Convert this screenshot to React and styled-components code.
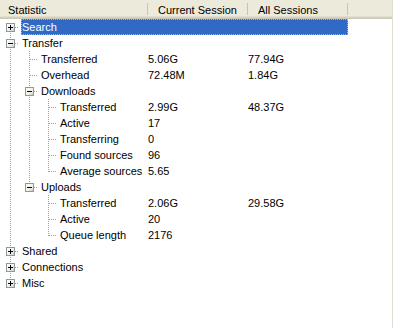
import React from "react";
import styled, { createGlobalStyle } from "styled-components";

const GlobalStyle = createGlobalStyle`
  html, body { margin: 0; padding: 0; background: #fff; }
  body {
    font-family: "Liberation Sans", Arial, sans-serif;
    font-size: 11px;
    color: #000;
  }
`;

const Frame = styled.div`
  width: 393px;
  height: 328px;
  box-sizing: border-box;
  border-right: 1px solid #e2dfd2;
  background: #fff;
  overflow: hidden;
`;

const Header = styled.div`
  display: flex;
  height: 19px;
  background: #ebeadb;
  box-shadow: inset 0 -1px #cbc7b8, inset 0 -2px #d6d2c2, inset 0 -3px #e2decd;
`;

const HeaderCell = styled.div`
  position: relative;
  flex: none;
  width: ${(p) => p.$w}px;
  box-sizing: border-box;
  padding-left: ${(p) => p.$pad}px;
  padding-top: 3px;
  line-height: 14px;
  white-space: nowrap;
  color: #000;
  &::after {
    content: "";
    position: absolute;
    right: 0;
    top: 3px;
    bottom: 4px;
    width: 1px;
    background: #c7c5b2;
  }
`;

const HeaderFill = styled.div`
  flex: 1;
`;

const Tree = styled.div`
  display: flex;
  flex-direction: column;
`;

const Row = styled.div`
  display: flex;
  height: 16px;
`;

const GuideSvg = styled.svg`
  flex: none;
  display: block;
  width: 19px;
  height: 16px;
  shape-rendering: crispEdges;
`;

const Body = styled.div`
  display: flex;
  flex: none;
  width: ${(p) => p.$w}px;
  margin-left: 2px;
  box-sizing: border-box;
  padding-top: 1px;
  line-height: 15px;
  white-space: nowrap;
  background: ${(p) => (p.$selected ? "#316ac5" : "transparent")};
  color: ${(p) => (p.$selected ? "#fff" : "#000")};
  outline: ${(p) => (p.$selected ? "1px dotted #9fb6e0" : "none")};
  outline-offset: -1px;
`;

const Label = styled.div`
  flex: 1;
  padding-left: 1px;
  overflow: hidden;
`;

const Value = styled.div`
  flex: none;
  width: 100px;
`;

const LINE = "#a0a0a0";

function Guide({ vertical, top, bottom, connector, expander, open }) {
  return (
    <GuideSvg viewBox="0 0 19 16">
      <defs>
        <linearGradient id="gbox" x1="0" y1="0" x2="1" y2="1">
          <stop offset="0" stopColor="#ffffff" />
          <stop offset="0.6" stopColor="#f0efe8" />
          <stop offset="1" stopColor="#c8c6b8" />
        </linearGradient>
      </defs>
      {vertical && (
        <line
          x1="10.5"
          y1={top ? 0 : 8}
          x2="10.5"
          y2={bottom ? 16 : 9}
          stroke={LINE}
          strokeDasharray="1 1"
        />
      )}
      {connector && (
        <line x1="11" y1="8.5" x2="19" y2="8.5" stroke={LINE} strokeDasharray="1 1" />
      )}
      {expander && (
        <g>
          <rect x="6.5" y="4.5" width="8" height="8" fill="url(#gbox)" stroke="#8c97a0" />
          <line x1="8" y1="8.5" x2="13" y2="8.5" stroke="#000" />
          {!open && <line x1="10.5" y1="6" x2="10.5" y2="11" stroke="#000" />}
        </g>
      )}
    </GuideSvg>
  );
}

const data = [
  { label: "Search", children: [{}], selected: true },
  {
    label: "Transfer",
    open: true,
    children: [
      { label: "Transferred", cur: "5.06G", all: "77.94G" },
      { label: "Overhead", cur: "72.48M", all: "1.84G" },
      {
        label: "Downloads",
        open: true,
        children: [
          { label: "Transferred", cur: "2.99G", all: "48.37G" },
          { label: "Active", cur: "17" },
          { label: "Transferring", cur: "0" },
          { label: "Found sources", cur: "96" },
          { label: "Average sources", cur: "5.65" },
        ],
      },
      {
        label: "Uploads",
        open: true,
        children: [
          { label: "Transferred", cur: "2.06G", all: "29.58G" },
          { label: "Active", cur: "20" },
          { label: "Queue length", cur: "2176" },
        ],
      },
    ],
  },
  { label: "Shared", children: [{}] },
  { label: "Connections", children: [{}] },
  { label: "Misc", children: [{}] },
];

function flatten(nodes, depth, cont, out) {
  nodes.forEach((n, i) => {
    const isLast = i === nodes.length - 1;
    const isFirstRoot = depth === 0 && i === 0;
    out.push({ ...n, depth, cont, isLast, isFirstRoot });
    if (n.children && n.open) flatten(n.children, depth + 1, [...cont, !isLast], out);
  });
  return out;
}

const rows = flatten(data, 0, [], []);

export default function App() {
  return (
    <>
      <GlobalStyle />
      <Frame>
        <Header>
          <HeaderCell $w={148} $pad={8}>Statistic</HeaderCell>
          <HeaderCell $w={100} $pad={10}>Current Session</HeaderCell>
          <HeaderCell $w={100} $pad={10}>All Sessions</HeaderCell>
          <HeaderFill />
        </Header>
        <Tree>
          {rows.map((r, idx) => (
            <Row key={idx}>
              {r.cont.map((c, i) => (
                <Guide key={i} vertical={c} top bottom />
              ))}
              <Guide
                vertical
                top={!r.isFirstRoot}
                bottom={!r.isLast}
                connector
                expander={!!r.children}
                open={r.open}
              />
              <Body $w={348 - (r.depth + 1) * 19 - 2} $selected={r.selected}>
                <Label>{r.label}</Label>
                <Value>{r.cur || ""}</Value>
                <Value>{r.all || ""}</Value>
              </Body>
            </Row>
          ))}
        </Tree>
      </Frame>
    </>
  );
}
